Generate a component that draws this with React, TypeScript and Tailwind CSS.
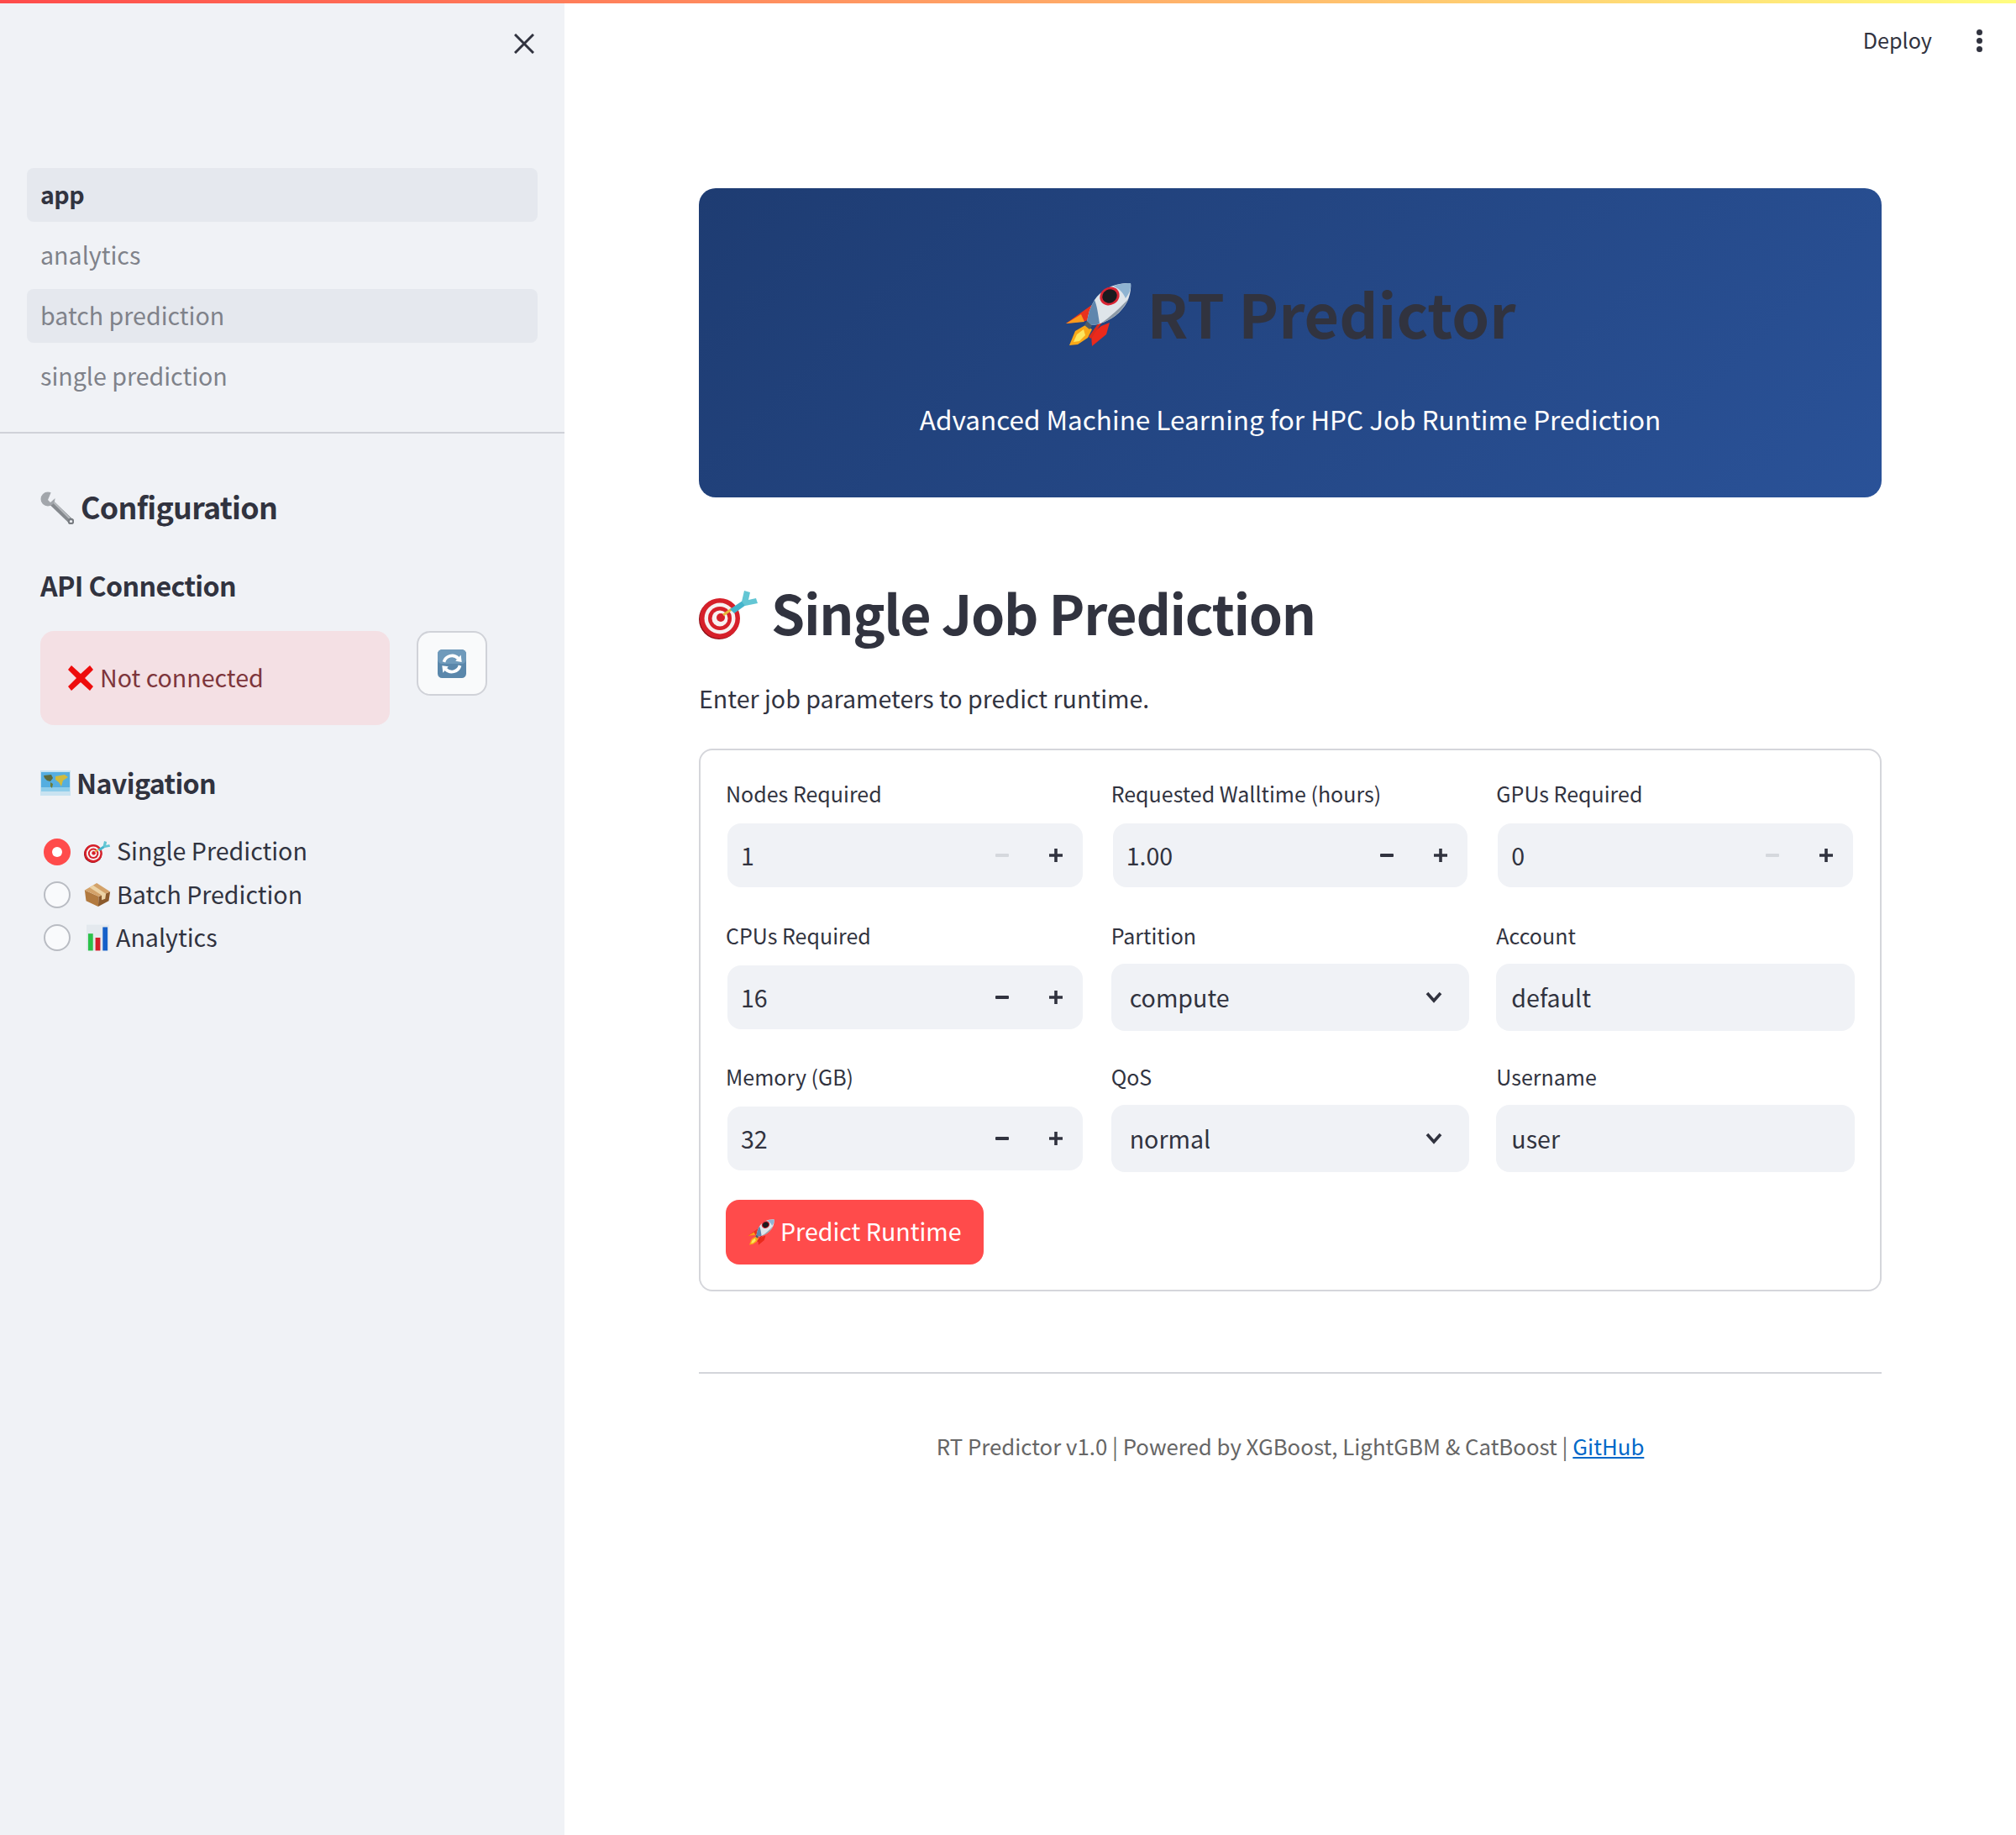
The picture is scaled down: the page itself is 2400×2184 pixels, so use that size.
import React from "react";

const Rocket = ({ className }: { className?: string }) => (
  <svg viewBox="9 7 79 77" className={className}>
    <path d="M42 32 L10 55 L34 52 L40 46 Z" fill="#e8321c" />
    <path d="M28 44 L10 55 L32 53 Z" fill="#fb9a1c" />
    <path d="M62 54 L58 68 L41 82 L40 68 L52 58 Z" fill="#ea2a1c" />
    <path d="M33 57 L21 64 L14 81 L24 80 L36 72 L41 62 Z" fill="#f9a818" />
    <path d="M31 62 L23 68 L19 77 L26 76 L33 69 Z" fill="#fde65e" />
    <path d="M37 71 L54 47 L56 49 L40 73 Z" fill="#d92b1c" />
    <path d="M87 7 C68 6 52 15 44 27 C39 35 36 44 35 54 C40 58 45 57 51 55 C64 51 76 42 83 29 C86 22 88 14 87 7 Z" fill="#dfe5ea" />
    <path d="M35 54 C36 44 39 35 44 27 C47 34 48 42 50 55 C45 57 40 58 35 54 Z" fill="#5f86ad" />
    <path d="M85 25 C76 42 64 51 51 55 C62 48 75 36 85 25 Z" fill="#8d9aa6" />
    <path d="M87 7 C78 7 72 8 66 11 C72 12 78 18 81 25 C85 20 88 14 87 7 Z" fill="#8fb4d2" />
    <ellipse cx="62" cy="22.5" rx="12" ry="10.5" transform="rotate(-30 62 22.5)" fill="#d92433" />
    <ellipse cx="62" cy="22.5" rx="9" ry="8" transform="rotate(-30 62 22.5)" fill="#1b1a1f" />
    <path d="M35 52 L41 58 L38 62 L32 57 Z" fill="#4f5c68" />
  </svg>
);

const Target = ({ className }: { className?: string }) => (
  <svg viewBox="4 7 72 62" className={className}>
    <circle cx="28" cy="43" r="24" fill="#8f0f18" />
    <circle cx="29" cy="42" r="24" fill="#d6202a" />
    <circle cx="29" cy="42" r="18.5" fill="#f7f1f1" />
    <circle cx="29" cy="42" r="14" fill="#d6202a" />
    <circle cx="29" cy="42" r="9.5" fill="#f7f1f1" />
    <circle cx="30" cy="41" r="5" fill="#d6202a" />
    <path d="M33 38 L43 31" stroke="#e8b93a" strokeWidth="3" />
    <path d="M41 31 L56 21 L60 26 L46 36 Z" fill="#43b4cb" />
    <path d="M55 22 L58 9 L65 11 L63 20 L72 18 L74 24 L59 27 Z" fill="#63c6d4" />
  </svg>
);

const Wrench = ({ className }: { className?: string }) => (
  <svg viewBox="4 2 40 40" className={className}>
    <path d="M16 15 L41 39" stroke="#85898e" strokeWidth="6.5" />
    <path d="M17 13 L39 35" stroke="#b7bbbf" strokeWidth="2" />
    <circle cx="13" cy="12" r="8.5" fill="#a2a6ab" />
    <path d="M13 13 L18 1 L26 7 L16 16 Z" fill="#f0f2f6" />
    <circle cx="40.5" cy="38.5" r="3.8" fill="#787c81" />
    <circle cx="40.5" cy="38.5" r="1.6" fill="#f0f2f6" />
  </svg>
);

const MapIcon = ({ className }: { className?: string }) => (
  <svg viewBox="0 0 36 30" className={className}>
    <rect width="36" height="30" fill="#c9e3f1" />
    <rect x="1" y="2" width="34" height="22" fill="#55aee0" />
    <rect x="1" y="20" width="34" height="5" fill="#8fcdea" />
    <path d="M4 6 L13 5 L15 9 L12 13 L8 12 L5 9 Z" fill="#5c6a3c" />
    <path d="M18 7 L29 5 L33 8 L27 12 L25 19 L22 14 L18 11 Z" fill="#d0bb3e" />
    <path d="M12 14 L15 16 L14 21 L12 19 Z" fill="#6d7c36" />
  </svg>
);

const RedX = ({ className }: { className?: string }) => (
  <svg viewBox="0 0 32 32" className={className}>
    <path d="M5 1 L16 11 L27 1 L31 6 L21 16 L31 26 L27 31 L16 21 L5 31 L1 26 L11 16 L1 6 Z" fill="#ee0c0c" />
  </svg>
);

const Refresh = ({ className }: { className?: string }) => (
  <svg viewBox="0 0 32 32" className={className}>
    <rect width="32" height="32" rx="5" fill="#5a87ab" />
    <rect width="32" height="16" rx="5" fill="#6f9abb" />
    <path d="M7 14 A9.5 9.5 0 0 1 23 10" fill="none" stroke="#fff" strokeWidth="3.5" />
    <path d="M20 13 L27 14 L26 6 Z" fill="#fff" />
    <path d="M25 18 A9.5 9.5 0 0 1 9 22" fill="none" stroke="#fff" strokeWidth="3.5" />
    <path d="M12 19 L5 18 L6 26 Z" fill="#fff" />
  </svg>
);

const PackageIcon = ({ className }: { className?: string }) => (
  <svg viewBox="4 2 38 35" className={className}>
    <path d="M5 13 L25 22 L24 36 L7 28 Z" fill="#b27a3f" />
    <path d="M25 22 L41 15 L39 28 L24 36 Z" fill="#8b5a2c" />
    <path d="M5 13 L22 3 L41 15 L25 22 Z" fill="#d3a269" />
    <path d="M12 9 L17 6 L35 18 L34 25 L29 27 L29 20 Z" fill="#ecd3a6" />
  </svg>
);

const BarChart = ({ className }: { className?: string }) => (
  <svg viewBox="0 0 28 32" className={className}>
    <rect width="28" height="32" fill="#e4e9ee" />
    <rect x="2" y="11" width="6" height="21" fill="#2bc24a" />
    <rect x="11" y="16" width="6" height="16" fill="#d4202a" />
    <rect x="20" y="3" width="6" height="29" fill="#1560c9" />
  </svg>
);

const NumberField = ({ value, minusOff }: { value: string; minusOff?: boolean }) => (
  <div className="flex h-[80px] items-center rounded-[18px] border-2 border-white bg-[#f0f2f6] pl-[16px]">
    <span className="flex-1 text-[28.6px] leading-[48px] text-[#31333f]">{value}</span>
    <div className="flex h-[64px] w-[64px] items-center justify-center">
      <div className={`h-[4px] w-[16px] rounded-[1px] ${minusOff ? "bg-[#d5d8dd]" : "bg-[#31333f]"}`} />
    </div>
    <div className="flex h-[64px] w-[64px] items-center justify-center">
      <svg viewBox="0 0 16 16" className="h-[16px] w-[16px]">
        <path d="M8 0 V16 M0 8 H16" stroke="#31333f" strokeWidth="3.6" />
      </svg>
    </div>
  </div>
);

const SelectField = ({ value }: { value: string }) => (
  <div className="flex h-[80px] items-center justify-between rounded-[16px] bg-[#f0f2f6] pl-[22px] pr-[32px]">
    <span className="text-[28.6px] leading-[48px] text-[#31333f]">{value}</span>
    <svg viewBox="0 0 20 14" className="h-[14px] w-[20px]">
      <path d="M2 2 L10 11 L18 2" fill="none" stroke="#31333f" strokeWidth="3.6" />
    </svg>
  </div>
);

const TextField = ({ value }: { value: string }) => (
  <div className="flex h-[80px] items-center rounded-[16px] bg-[#f0f2f6] pl-[18px]">
    <span className="text-[28.6px] leading-[48px] text-[#31333f]">{value}</span>
  </div>
);

const Cell = ({ label, children }: { label: string; children: React.ReactNode }) => (
  <div>
    <div className="flex h-[46px] items-center text-[25px] text-[#31333f]">{label}</div>
    <div className="mt-[10px]">{children}</div>
  </div>
);

const App = () => {
  return (
    <div className="flex min-h-[2184px] flex-col bg-white font-['Noto_Sans_CJK_SC',sans-serif] text-[#31333f]">
      <div className="h-[4px] w-full bg-[linear-gradient(90deg,#ff4b4b,#fffd80)]" />
      <div className="flex flex-1">
        <aside className="w-[672px] shrink-0 bg-[#f0f2f6]">
          <div className="flex justify-end pt-[36px] pr-[36px]">
            <svg viewBox="0 0 24 24" className="h-[24px] w-[24px]">
              <path d="M1 1 L23 23 M23 1 L1 23" stroke="#31333f" strokeWidth="3" />
            </svg>
          </div>
          <nav className="mx-[32px] mt-[136px] flex flex-col gap-[8px] text-[28.6px]">
            <div className="flex h-[64px] items-center rounded-[8px] bg-[#e5e8ee] px-[16px] pb-[2px] font-semibold tracking-[-0.02em] text-[#31333f]">app</div>
            <div className="flex h-[64px] items-center px-[16px] pb-[2px] text-[#7f828a]">analytics</div>
            <div className="flex h-[64px] items-center rounded-[8px] bg-[#e5e8ee] px-[16px] pb-[2px] text-[#7f828a]">batch prediction</div>
            <div className="flex h-[64px] items-center px-[16px] pb-[2px] text-[#7f828a]">single prediction</div>
          </nav>
          <div className="mt-[34px] h-[2px] bg-[#d0d2d8]" />
          <div className="px-[48px]">
            <div className="mt-[58px] flex h-[60px] items-center gap-[8px] text-[35.8px] font-semibold tracking-[-0.02em]">
              <Wrench className="h-[40px] w-[40px]" />
              <span className="-mt-[2px]">Configuration</span>
            </div>
            <div className="mt-[35px] flex h-[54px] items-center text-[32.2px] font-semibold tracking-[-0.02em]">API Connection</div>
            <div className="mt-[28px] flex items-start gap-[32px]">
              <div className="flex h-[112px] w-[416px] items-center gap-[7px] rounded-[16px] bg-[#f4e0e4] pl-[32px] text-[28.6px] text-[#7d353b]">
                <RedX className="h-[32px] w-[32px]" />
                <span className="-mt-[2px]">Not connected</span>
              </div>
              <div className="flex h-[77px] w-[84px] items-center justify-center rounded-[16px] border-2 border-[#d0d2d8] bg-[#f9fafb]">
                <Refresh className="h-[34px] w-[34px]" />
              </div>
            </div>
            <div className="mt-[45px] flex h-[48px] items-center gap-[7px] text-[32.2px] font-semibold tracking-[-0.02em]">
              <MapIcon className="h-[30px] w-[36px]" />
              <span className="-mt-[2px]">Navigation</span>
            </div>
            <div className="mt-[32px] text-[28.6px]">
              <div className="flex h-[51px] items-center">
                <div className="ml-[4px] flex h-[32px] w-[32px] items-center justify-center rounded-full bg-[#ff4b4b]">
                  <div className="h-[12px] w-[12px] rounded-full bg-white" />
                </div>
                <Target className="ml-[16px] h-[28px] w-[32px]" />
                <span className="-mt-[2px] ml-[7px]">Single Prediction</span>
              </div>
              <div className="flex h-[51px] items-center">
                <div className="ml-[4px] h-[32px] w-[32px] rounded-full border-2 border-[#b9bcc3] bg-[#f9fafc]" />
                <PackageIcon className="ml-[16px] h-[32px] w-[32px]" />
                <span className="-mt-[1px] ml-[7px]">Batch Prediction</span>
              </div>
              <div className="flex h-[51px] items-center">
                <div className="ml-[4px] h-[32px] w-[32px] rounded-full border-2 border-[#b9bcc3] bg-[#f9fafc]" />
                <BarChart className="ml-[19px] h-[32px] w-[27px]" />
                <span className="ml-[8px]">Analytics</span>
              </div>
            </div>
          </div>
        </aside>
        <main className="min-w-0 flex-1">
          <div className="flex h-[88px] items-center justify-end pr-[40px]">
            <span className="text-[25.2px]">Deploy</span>
            <div className="ml-[53px] flex flex-col gap-[3px]">
              <div className="h-[7px] w-[7px] rounded-full bg-[#31333f]" />
              <div className="h-[7px] w-[7px] rounded-full bg-[#31333f]" />
              <div className="h-[7px] w-[7px] rounded-full bg-[#31333f]" />
            </div>
          </div>
          <div className="mx-[160px]">
            <div className="mt-[132px] h-[368px] rounded-[20px] bg-[linear-gradient(135deg,#1e3c72,#2a5298)] pt-[103px]">
              <div className="flex h-[96px] items-center justify-center gap-[19px] text-[71.8px] font-bold text-[#31333f]">
                <Rocket className="h-[77px] w-[79px]" />
                <span className="-mt-[5px]">RT Predictor</span>
              </div>
              <div className="mt-[52px] flex h-[48px] items-center justify-center text-[31.5px] text-white">
                Advanced Machine Learning for HPC Job Runtime Prediction
              </div>
            </div>
            <div className="mt-[92px] flex h-[96px] items-center gap-[14px] text-[64.4px] font-semibold tracking-[-0.02em]">
              <Target className="h-[62px] w-[72px]" />
              <span className="-mt-[7px]">Single Job Prediction</span>
            </div>
            <div className="mt-[27px] flex h-[48px] items-center text-[28.6px]">Enter job parameters to predict runtime.</div>
            <div className="mt-[36px] rounded-[16px] border-2 border-[#d5d6db] px-[30px] pt-[29px] pb-[30px]">
              <div className="grid grid-cols-3 gap-x-[32px] gap-y-[32.5px]">
                <Cell label="Nodes Required"><NumberField value="1" minusOff /></Cell>
                <Cell label="Requested Walltime (hours)"><NumberField value="1.00" /></Cell>
                <Cell label="GPUs Required"><NumberField value="0" minusOff /></Cell>
                <Cell label="CPUs Required"><NumberField value="16" /></Cell>
                <Cell label="Partition"><SelectField value="compute" /></Cell>
                <Cell label="Account"><TextField value="default" /></Cell>
                <Cell label="Memory (GB)"><NumberField value="32" /></Cell>
                <Cell label="QoS"><SelectField value="normal" /></Cell>
                <Cell label="Username"><TextField value="user" /></Cell>
              </div>
              <button className="mt-[33px] flex h-[77px] w-[307px] items-center gap-[7px] rounded-[16px] bg-[#ff4b4b] pl-[26px] text-[28.6px] whitespace-nowrap text-white">
                <Rocket className="h-[32px] w-[32px]" />
                <span className="-mt-[2px]">Predict Runtime</span>
              </button>
            </div>
            <div className="mt-[96px] h-[2px] bg-[#d3d5da]" />
            <div className="mt-[66px] flex h-[40px] items-center justify-center text-[25.8px] text-[#666666]">
              <span>
                RT Predictor v1.0 | Powered by XGBoost, LightGBM &amp; CatBoost |{" "}
                <a className="text-[#0068c9] underline">GitHub</a>
              </span>
            </div>
          </div>
        </main>
      </div>
    </div>
  );
};

export default App;
